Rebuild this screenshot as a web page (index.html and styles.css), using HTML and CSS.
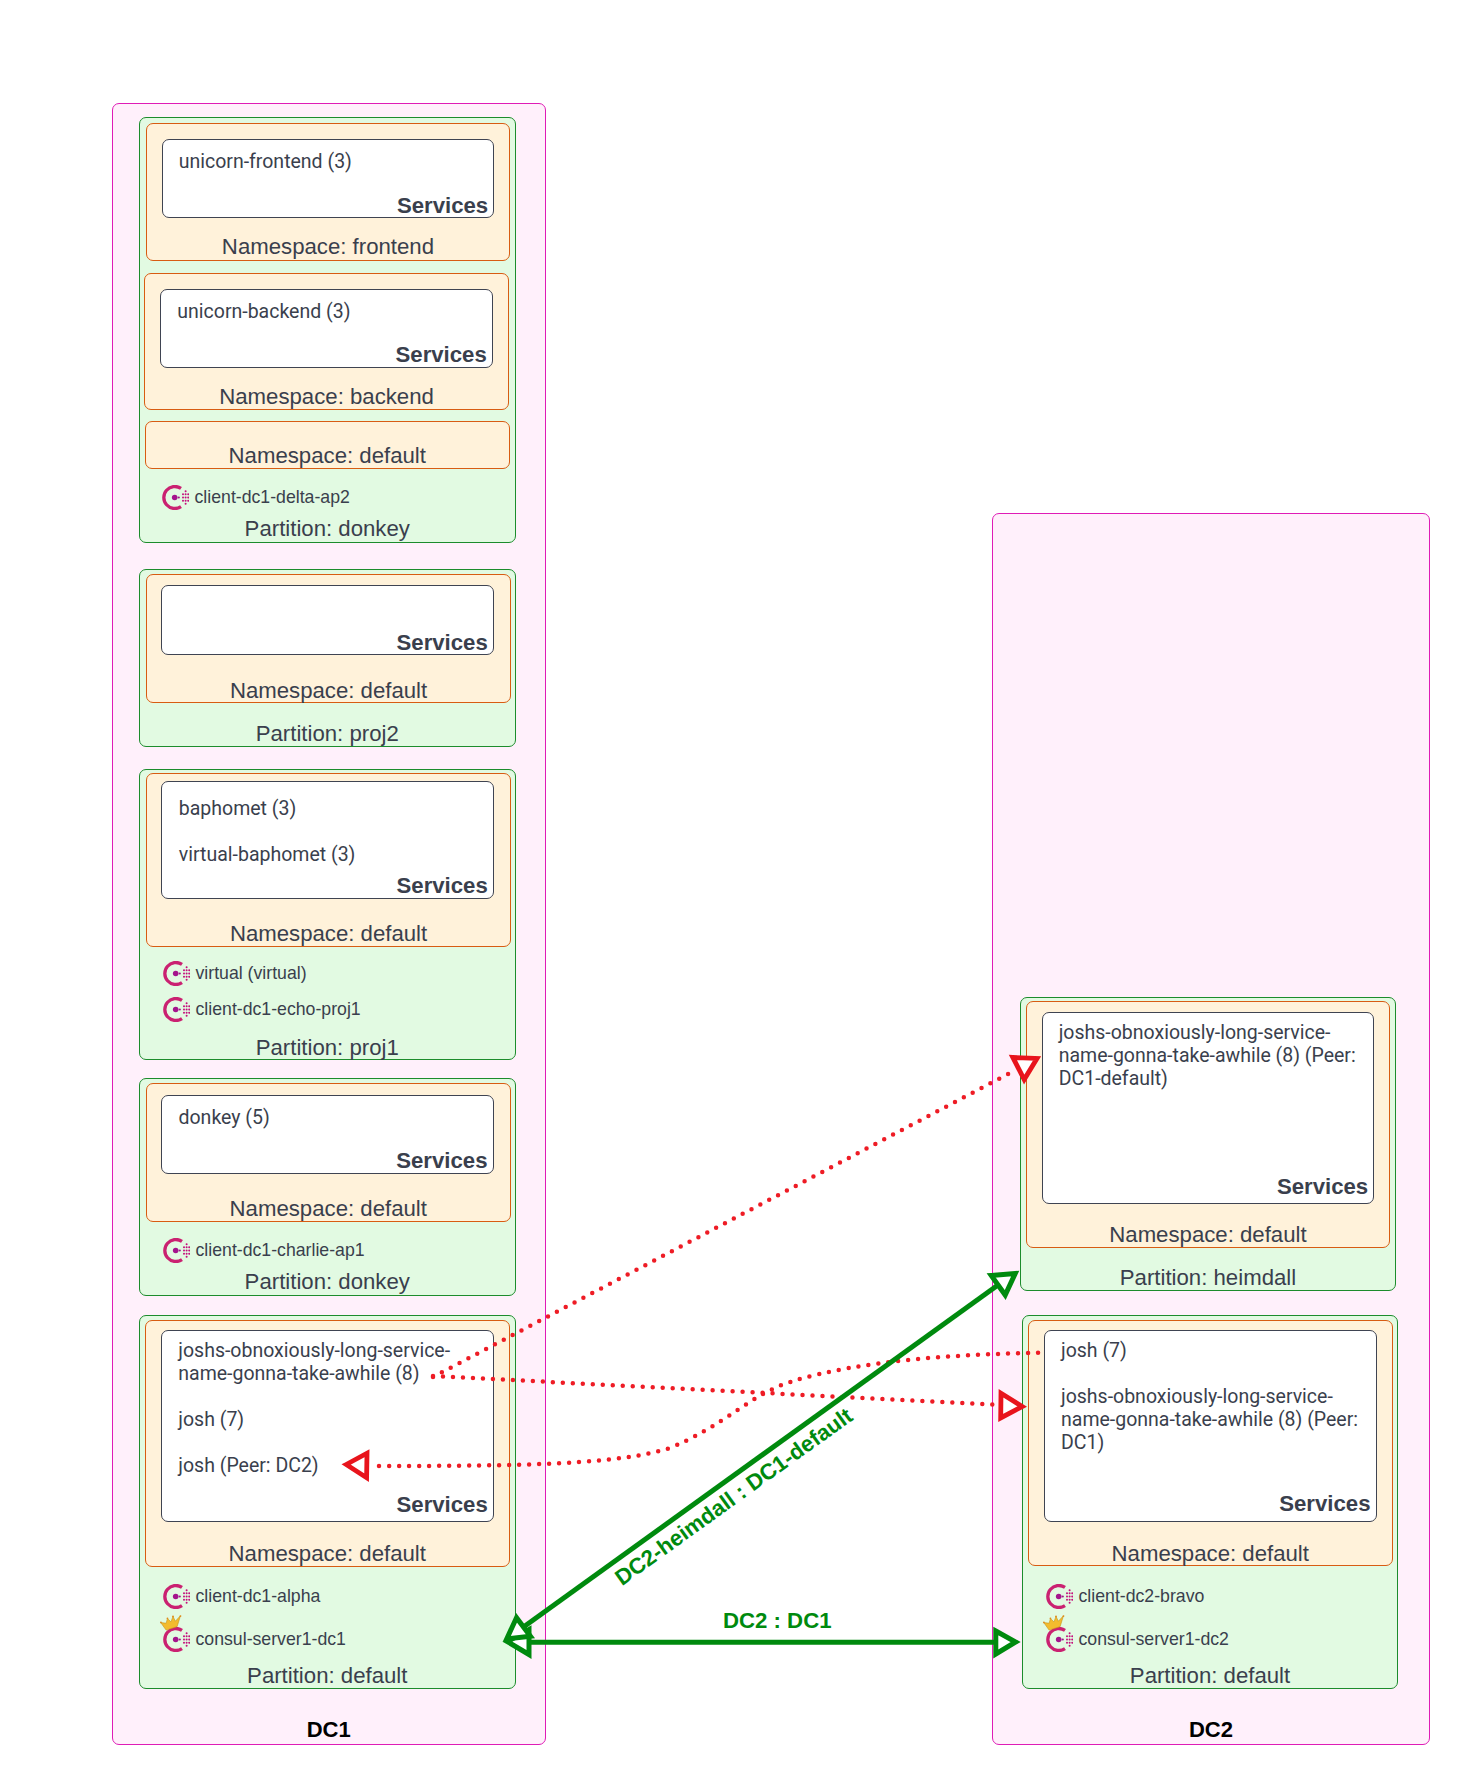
FILE: index.html
```html
<!DOCTYPE html>
<html lang="en">
<head>
<meta charset="utf-8">
<title>Topology</title>
<link rel="stylesheet" href="styles.css">
</head>
<body>
<svg class="defs" width="0" height="0" aria-hidden="true">
  <symbol id="consul" viewBox="0 0 27 25">
    <path d="M19 3.4A11 11 0 1 0 19 21.6" fill="none" stroke="#ca2171" stroke-width="3.3"/>
    <circle cx="12.7" cy="12.5" r="2.8" fill="#a5148c"/>
    <circle cx="16.8" cy="12.5" r="1.1" fill="#a5148c"/>
    <g fill="#c5107c">
      <circle cx="21" cy="9.3" r="1"/><circle cx="21" cy="12.5" r="1"/><circle cx="21" cy="15.7" r="1"/>
      <circle cx="23.6" cy="6.3" r="1"/><circle cx="23.6" cy="9.3" r="1"/><circle cx="23.6" cy="12.5" r="1"/><circle cx="23.6" cy="15.7" r="1"/><circle cx="23.6" cy="18.7" r="1"/>
      <circle cx="26.2" cy="9.3" r="1"/><circle cx="26.2" cy="12.5" r="1"/><circle cx="26.2" cy="15.7" r="1"/>
    </g>
  </symbol>
  <symbol id="crown" viewBox="0 0 22 16">
    <polygon points="0.7,7.3 6,8 7.3,3.3 10.7,6.7 12.7,1.3 15,6 20,0.7 16.7,11.3 6,14.7" fill="#f3bb2e" stroke="#c8931a" stroke-width="0.6"/>
    <g fill="#e08a1e">
      <circle cx="0.9" cy="7.2" r="0.9"/><circle cx="7.3" cy="3.2" r="0.9"/><circle cx="12.7" cy="1.3" r="0.9"/><circle cx="20" cy="1" r="0.9"/>
    </g>
  </symbol>
</svg>

<main class="canvas">
  <section class="dc dc1">
    <div class="part p1">
      <div class="ns n1">
        <div class="svc s1"><ul class="list"><li>unicorn-frontend (3)</li></ul><b class="svc-title">Services</b></div>
        <span class="ns-label">Namespace: frontend</span>
      </div>
      <div class="ns n2">
        <div class="svc s2"><ul class="list"><li>unicorn-backend (3)</li></ul><b class="svc-title">Services</b></div>
        <span class="ns-label">Namespace: backend</span>
      </div>
      <div class="ns n3"><span class="ns-label">Namespace: default</span></div>
      <div class="node nd-p1"><svg class="ico"><use href="#consul"/></svg><span>client-dc1-delta-ap2</span></div>
      <span class="part-label">Partition: donkey</span>
    </div>

    <div class="part p2">
      <div class="ns n4">
        <div class="svc s3"><ul class="list"></ul><b class="svc-title">Services</b></div>
        <span class="ns-label">Namespace: default</span>
      </div>
      <span class="part-label">Partition: proj2</span>
    </div>

    <div class="part p3">
      <div class="ns n5">
        <div class="svc s4"><ul class="list"><li>baphomet (3)</li><li>virtual-baphomet (3)</li></ul><b class="svc-title">Services</b></div>
        <span class="ns-label">Namespace: default</span>
      </div>
      <div class="node nd-p3a"><svg class="ico"><use href="#consul"/></svg><span>virtual (virtual)</span></div>
      <div class="node nd-p3b"><svg class="ico"><use href="#consul"/></svg><span>client-dc1-echo-proj1</span></div>
      <span class="part-label">Partition: proj1</span>
    </div>

    <div class="part p4">
      <div class="ns n6">
        <div class="svc s5"><ul class="list"><li>donkey (5)</li></ul><b class="svc-title">Services</b></div>
        <span class="ns-label">Namespace: default</span>
      </div>
      <div class="node nd-p4"><svg class="ico"><use href="#consul"/></svg><span>client-dc1-charlie-ap1</span></div>
      <span class="part-label">Partition: donkey</span>
    </div>

    <div class="part p5">
      <div class="ns n7">
        <div class="svc s6"><ul class="list"><li>joshs-obnoxiously-long-service-name-gonna-take-awhile (8)</li><li>josh (7)</li><li>josh (Peer: DC2)</li></ul><b class="svc-title">Services</b></div>
        <span class="ns-label">Namespace: default</span>
      </div>
      <div class="node nd-a"><svg class="ico"><use href="#consul"/></svg><span>client-dc1-alpha</span></div>
      <div class="node nd-b"><svg class="ico"><use href="#consul"/></svg><svg class="crown"><use href="#crown"/></svg><span>consul-server1-dc1</span></div>
      <span class="part-label">Partition: default</span>
    </div>
    <h2 class="dc-label">DC1</h2>
  </section>

  <section class="dc dc2">
    <div class="part p6">
      <div class="ns n8">
        <div class="svc s7"><ul class="list"><li>joshs-obnoxiously-long-service-name-gonna-take-awhile (8) (Peer: DC1-default)</li></ul><b class="svc-title">Services</b></div>
        <span class="ns-label">Namespace: default</span>
      </div>
      <span class="part-label">Partition: heimdall</span>
    </div>
    <div class="part p7">
      <div class="ns n9">
        <div class="svc s8"><ul class="list"><li>josh (7)</li><li>joshs-obnoxiously-long-service-name-gonna-take-awhile (8) (Peer: DC1)</li></ul><b class="svc-title">Services</b></div>
        <span class="ns-label">Namespace: default</span>
      </div>
      <div class="node nd-a nd-c"><svg class="ico"><use href="#consul"/></svg><span>client-dc2-bravo</span></div>
      <div class="node nd-b nd-c"><svg class="ico"><use href="#consul"/></svg><svg class="crown"><use href="#crown"/></svg><span>consul-server1-dc2</span></div>
      <span class="part-label">Partition: default</span>
    </div>
    <h2 class="dc-label">DC2</h2>
  </section>

  <svg class="edges" viewBox="0 0 1470 1785" width="1470" height="1785" aria-hidden="true">
    <g class="dots">
      <path d="M433 1377L1010 1073"/>
      <path d="M433 1376L1000 1405"/>
      <path d="M379 1466C530 1466 620 1464 670 1448C725 1425 750 1395 790 1382C860 1360 960 1354 1045 1352.7"/>
    </g>
    <g class="tri-red">
      <polygon points="1012.8,1057.4 1037,1058.4 1024.2,1079.5"/>
      <polygon points="1001,1393.3 1022.2,1406.5 1000.7,1417.9"/>
      <polygon points="346.2,1464.5 367,1453.2 366.6,1477.7"/>
    </g>
    <g class="solid">
      <path d="M523.5 1627L998 1285"/>
      <path d="M529 1642.3H995.8"/>
    </g>
    <g class="tri-green">
      <polygon points="995.8,1631 1015.7,1642 995.8,1654"/>
      <polygon points="507.5,1641.7 529,1629.5 529,1654.5"/>
      <polygon points="516.5,1617.7 506.8,1638.8 530.4,1636.3"/>
      <polygon points="991.2,1275.4 1015.2,1273.5 1005.2,1295"/>
    </g>
  </svg>
  <span class="edge-label el-diag">DC2-heimdall : DC1-default</span>
  <span class="edge-label el-flat">DC2 : DC1</span>
</main>
</body>
</html>
```

FILE: styles.css
```css
* { box-sizing: border-box; }
html, body { margin: 0; padding: 0; background: #fff; }
.defs { position: absolute; }
.canvas {
  position: relative;
  width: 1470px;
  height: 1785px;
  overflow: hidden;
  font-family: "Liberation Sans", Arial, sans-serif;
  color: #3a3f4d;
}

/* Datacentre panels: nodes on the free canvas */
.dc {
  position: absolute;
  display: flex;
  flex-direction: column;
  align-items: flex-start;
  background: #fff0fb;
  border: 1px solid #df1cb6;
  border-radius: 7px;
}
.dc1 { left: 112px; top: 103px; width: 433.5px; height: 1642px; }
.dc2 { left: 992px; top: 513px; width: 438px; height: 1232px; }
.dc-label {
  margin: auto 0 0;
  width: 100%;
  text-align: center;
  font-size: 22px;
  line-height: 24px;
  font-weight: 700;
  color: #000;
  padding-bottom: 2.5px;
}

/* Partitions */
.part {
  display: flex;
  flex-direction: column;
  align-items: flex-start;
  flex: none;
  width: 376.5px;
  margin-left: 26px;
  background: #e2fae2;
  border: 1px solid #1c8c2c;
  border-radius: 7px;
}
.part-label {
  align-self: stretch;
  margin-top: auto;
  text-align: center;
  font-size: 22.2px;
  line-height: 24px;
  padding-bottom: 0.5px;
}
.p1 { margin-top: 13px; height: 426px; }
.p2 { margin-top: 25.5px; height: 178.5px; }
.p3 { margin-top: 22px; height: 290.5px; }
.p4 { margin-top: 18.5px; height: 217.5px; }
.p5 { margin-top: 19.5px; height: 374px; }
.p6 { margin-top: 483px; margin-left: 27px; width: 376px; height: 294px; }
.p7 { margin-top: 23.5px; margin-left: 29px; width: 376px; height: 374.5px; }
.p1 .part-label { padding-bottom: 1.5px; }
.p3 .part-label { margin-bottom: -1.5px; }

/* Namespaces */
.ns {
  display: flex;
  flex-direction: column;
  align-items: flex-start;
  flex: none;
  width: 364.5px;
  background: #fff2da;
  border: 1px solid #d85c12;
  border-radius: 7px;
}
.ns-label {
  align-self: stretch;
  margin-top: auto;
  text-align: center;
  font-size: 22.2px;
  line-height: 22px;
  padding-bottom: 0.5px;
}
.n1 .ns-label, .n2 .ns-label, .n3 .ns-label { line-height: 24px; }
.n1 { margin: 5.3px 0 0 5.7px; height: 137.4px; }
.n2 { margin: 12.3px 0 0 4.3px; height: 137.3px; }
.n3 { margin: 11px 0 0 5px; height: 48px; }
.n4 { margin: 4.2px 0 0 6.3px; height: 129.6px; }
.n5 { margin: 3.3px 0 0 6.3px; height: 173.4px; }
.n6 { margin: 4px 0 0 6px; height: 138.7px; }
.n7 { margin: 4px 0 0 5px; height: 246.7px; }
.n8 { margin: 3.4px 0 0 4.7px; height: 246.6px; }
.n9 { margin: 4.3px 0 0 5px; height: 246.7px; }

/* Service boxes */
.svc {
  display: flex;
  flex-direction: column;
  flex: none;
  width: 332.5px;
  margin-left: 15px;
  background: #fff;
  border: 1px solid #3f4452;
  border-radius: 7px;
  padding: 0 5px 0 16px;
}
.list {
  list-style: none;
  margin: 0;
  padding: 0 5px 0 0;
  font-family: Roboto, "Liberation Sans", sans-serif;
  font-size: 19.5px;
  line-height: 23px;
}
.list li + li { margin-top: 23px; }
.svc-title {
  margin-top: auto;
  text-align: right;
  font-size: 22.2px;
  line-height: 22px;
  padding-bottom: 0.5px;
}
.s1 { margin-top: 15px; height: 79px; padding-top: 9.5px; }
.s2 { margin-top: 15.3px; height: 78.4px; padding-top: 9.5px; }
.s3 { margin-top: 10.6px; height: 70px; }
.s4 { margin-top: 7px; height: 117.4px; padding-top: 15px; padding-left: 16.5px; }
.s5 { margin-top: 11px; height: 78.7px; padding-top: 10px; padding-left: 16.5px; }
.s6 { margin-top: 9px; height: 192.3px; padding-top: 8px; padding-bottom: 5px; }
.s7 { margin-top: 9.6px; height: 192.4px; padding-top: 8px; padding-bottom: 5px; }
.s8 { margin-top: 9px; height: 192px; padding-top: 8.5px; padding-bottom: 5px; }
.s6 { margin-left: 15.3px; }
.s4, .s5, .s3 { margin-left: 14px; }

/* Consul nodes */
.node {
  position: relative;
  display: flex;
  align-items: center;
  gap: 5.5px;
  flex: none;
  height: 25px;
  margin-left: 23px;
  font-size: 17.7px;
}
.ico { flex: none; width: 27px; height: 25px; overflow: visible; }
.crown { position: absolute; left: -3.5px; top: -12px; width: 22.5px; height: 16.5px; }
.nd-p1 { margin-top: 15.5px; margin-left: 22px; }
.nd-p3a { margin-top: 14.3px; }
.nd-p3b { margin-top: 11px; }
.nd-p4 { margin-top: 16.6px; }
.nd-a { margin-top: 17.3px; }
.nd-b { margin-top: 18.4px; }

/* Connections overlay */
.edges { position: absolute; left: 0; top: 0; pointer-events: none; }
.dots path {
  fill: none;
  stroke: #ee1c25;
  stroke-width: 4.5;
  stroke-linecap: round;
  stroke-dasharray: 0 10;
}
.tri-red polygon {
  fill: #fff;
  stroke: #e8141c;
  stroke-width: 4.8;
  stroke-miterlimit: 10;
}
.solid path { fill: none; stroke: #008a0e; stroke-width: 5; }
.tri-green polygon {
  fill: #fff;
  stroke: #008a0e;
  stroke-width: 5;
  stroke-miterlimit: 10;
}
.edge-label {
  position: absolute;
  white-space: nowrap;
  font-size: 22.2px;
  line-height: 24px;
  font-weight: 700;
  color: #008a0e;
}
.el-flat { left: 723px; top: 1609px; }
.el-diag { left: 733.5px; top: 1497px; transform: translate(-50%, -50%) rotate(-35.75deg); }
```
